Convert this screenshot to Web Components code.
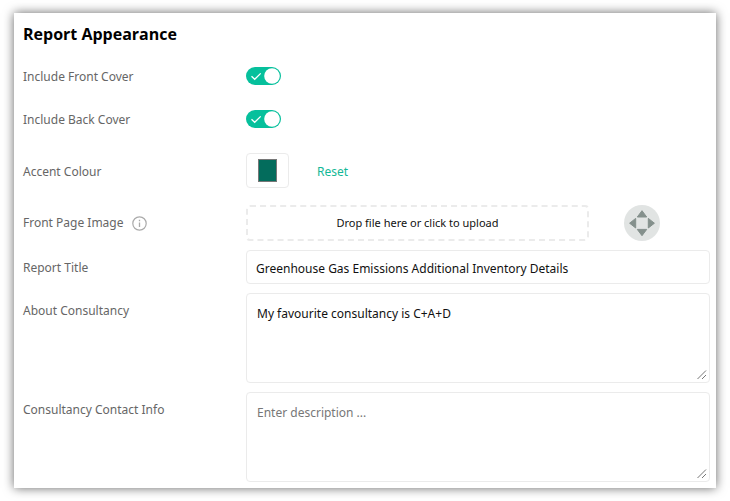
<!DOCTYPE html>
<html lang="en">
<head>
<meta charset="utf-8">
<meta name="viewport" content="width=device-width, initial-scale=1">
<title>Report Appearance</title>
<style>
  body { margin: 0; padding: 13px 14px; background: #fff; font: 12px/20px "Noto Sans", "Open Sans", sans-serif; color: #111; }
</style>
</head>
<body>
<report-panel heading="Report Appearance">
  <toggle-field>Include Front Cover</toggle-field>
  <toggle-field>Include Back Cover</toggle-field>
  <colour-field value="#036c5c">Accent Colour</colour-field>
  <upload-field>Front Page Image</upload-field>
  <text-field value="Greenhouse Gas Emissions Additional Inventory Details">Report Title</text-field>
  <area-field value="My favourite consultancy is C+A+D">About Consultancy</area-field>
  <area-field placeholder="Enter description ...">Consultancy Contact Info</area-field>
</report-panel>

<script>
class ReportPanel extends HTMLElement {
  constructor() {
    super();
    this.attachShadow({ mode: 'open' }).innerHTML = `
      <style>
        :host { display: block; background: #fff; padding: 6px 6px 6px 9px; box-shadow: 0 0 10px rgba(0,0,0,.6); }
        h2 { margin: 0 0 10px; font-family: "Open Sans", sans-serif; font-size: 16px; line-height: 30px; font-weight: 700; color: #000; }
        .rows { display: flex; flex-direction: column; gap: 9px; }
      </style>
      <h2></h2>
      <div class="rows"><slot></slot></div>`;
  }
  connectedCallback() {
    this.shadowRoot.querySelector('h2').textContent = this.getAttribute('heading');
  }
}

class FormField extends HTMLElement {
  constructor() {
    super();
    this.attachShadow({ mode: 'open' }).innerHTML = `
      <style>
        :host { display: grid; grid-template-columns: 223px minmax(0, 1fr); }
        * { box-sizing: border-box; }
        .name { display: flex; gap: 8px; align-items: center; height: 34px; padding-top: 2px; color: #666; }
        .control { display: flex; align-items: center; min-height: 34px; }
        input, textarea, button { font: inherit; color: inherit; }
        .box { display: block; width: 100%; margin: 0; border: 1px solid #ebebeb; border-radius: 4px; background: #fff; outline: none; }
        ${this.css}
      </style>
      <div class="name"><label for="control"><slot></slot></label>${this.extra}</div>
      <div class="control">${this.markup}</div>`;
  }
  get css() { return ''; }
  get extra() { return ''; }
  get markup() { return ''; }
  connectedCallback() {
    const control = this.shadowRoot.getElementById('control');
    if (this.hasAttribute('value')) control.value = this.getAttribute('value');
    if (this.hasAttribute('placeholder')) control.placeholder = this.getAttribute('placeholder');
  }
}

class ToggleField extends FormField {
  get css() {
    return `
      .switch { display: grid; width: 35px; height: 18px; }
      .switch > * { grid-area: 1 / 1; }
      input { appearance: none; width: 35px; height: 18px; margin: 0; border-radius: 9px; background: #aaa; cursor: pointer; }
      input:checked { background: #06c09c; }
      svg { pointer-events: none; }`;
  }
  get markup() {
    return `<span class="switch"><input id="control" type="checkbox" role="switch" checked>
      <svg width="35" height="18" viewBox="0 0 35 18" aria-hidden="true">
        <path d="M5.5 9.2 8.7 12.3 14.7 6.4" fill="none" stroke="#fff" stroke-width="1.3"/>
        <circle cx="26" cy="9" r="7.8" fill="#fff"/>
      </svg></span>`;
  }
}

class ColourField extends FormField {
  get css() {
    return `
      :host { margin-top: 8px; }
      .name { height: 35px; }
      .control { gap: 28px; }
      input { width: 43px; height: 35px; padding: 5px 11px; margin: 0; border: 1px solid #ebebeb; border-radius: 4px; background: #fff; }
      input::-webkit-color-swatch-wrapper { padding: 0; }
      input::-webkit-color-swatch { border: 1px solid #777; border-radius: 0; }
      button { border: 0; padding: 2px 0 0; background: none; color: #14b897; cursor: pointer; }`;
  }
  get markup() {
    return `<input id="control" type="color"><button type="button">Reset</button>`;
  }
}

class UploadField extends FormField {
  get css() {
    return `
      :host { margin-top: 8px; }
      .name { height: 36px; padding: 0; }
      .control { gap: 35px; padding-right: 50px; }
      .drop { flex: 1; height: 36px; padding: 0; border: 2px dashed #ebebeb; border-radius: 4px; background: #fff; font-size: 11px; cursor: pointer; }
      svg { display: block; flex: none; }`;
  }
  get extra() {
    return `<svg width="15" height="15" viewBox="0 0 15 15" role="img" aria-label="Information">
      <circle cx="7.5" cy="7.5" r="6.7" fill="none" stroke="#aaa" stroke-width="1.2"/>
      <path d="M7.5 6.4V11M7.5 3.8V5.2" stroke="#aaa" stroke-width="1.3"/></svg>`;
  }
  get markup() {
    return `<button class="drop" id="control" type="button">Drop file here or click to upload</button>
      <svg width="36" height="36" viewBox="0 0 36 36" role="img" aria-label="Image preview">
        <circle cx="18" cy="18" r="18" fill="#e1e4e3"/>
        <g fill="#84908c" stroke="#84908c" stroke-linejoin="round">
          <path d="M18 5.7 22.7 12H13.3Z"/><path d="M18 30.7 22.7 24.4H13.3Z"/>
          <path d="M5.6 18.2 11.7 13.4V23Z"/><path d="M30.4 18.2 24.3 13.4V23Z"/>
        </g>
      </svg>`;
  }
}

class TextField extends FormField {
  get css() { return `.box { height: 34px; padding: 2px 9px 0; }`; }
  get markup() { return `<input class="box" id="control" type="text">`; }
}

class AreaField extends FormField {
  get css() {
    return `.box { height: 90px; padding: 10px; resize: vertical; }
      textarea::placeholder { color: #777; opacity: 1; }
      textarea::-webkit-resizer {
        background: url("data:image/svg+xml,%3Csvg xmlns='http://www.w3.org/2000/svg' width='15' height='15'%3E%3Cpath d='M3.5 12 12 3.5M8 12 12 8' stroke='%23777' fill='none'/%3E%3C/svg%3E") no-repeat center;
      }`;
  }
  get markup() { return `<textarea class="box" id="control"></textarea>`; }
}

customElements.define('toggle-field', ToggleField);
customElements.define('colour-field', ColourField);
customElements.define('upload-field', UploadField);
customElements.define('text-field', TextField);
customElements.define('area-field', AreaField);
customElements.define('report-panel', ReportPanel);
</script>
</body>
</html>
